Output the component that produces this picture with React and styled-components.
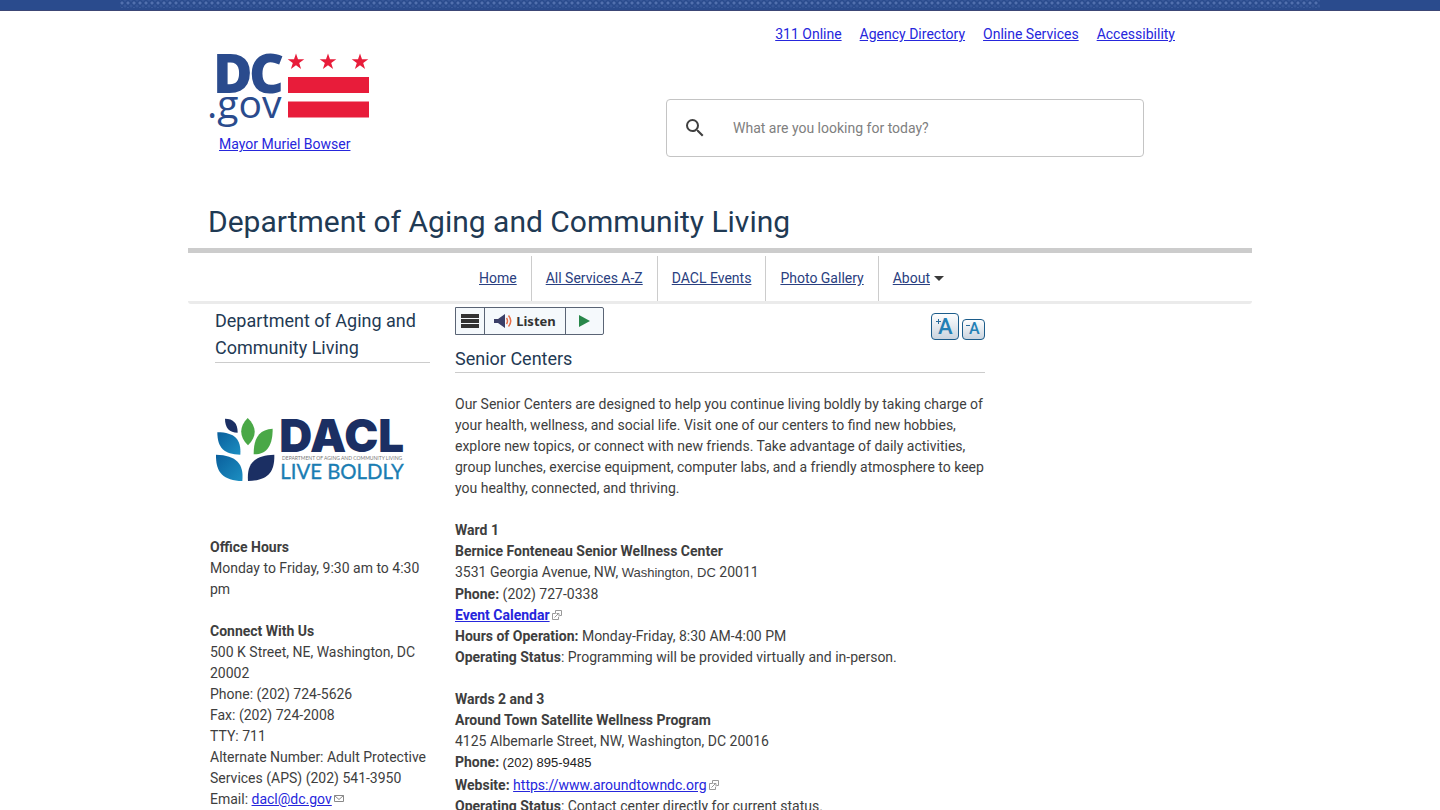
import React, { useState } from 'react';
import styled, { createGlobalStyle } from 'styled-components';
import { MdSearch } from 'react-icons/md';

const GlobalStyle = createGlobalStyle`
  body {
    margin: 0;
    background: #fff;
    color: #3e3e3e;
    font-family: Roboto, 'Liberation Sans', sans-serif;
    font-size: 14px;
    line-height: 21px;
  }
  a {
    color: #2626dc;
  }
`;

const TopBar = styled.div`
  height: 10px;
  background: #2a4b8d;
  border-bottom: 1px solid #3c4675;
`;

const Dots = styled.div`
  max-width: 1200px;
  height: 8px;
  margin: 0 auto;
  background-image: radial-gradient(circle, #5270ae 1px, transparent 2px),
    radial-gradient(circle, #38589a 1px, transparent 2px);
  background-size: 6px 6px;
  background-position: -1px 0, 2px 3px;
`;

const Wrap = styled.div`
  max-width: 1064px;
  margin: 0 auto;
`;

const Header = styled.header`
  display: flex;
  justify-content: space-between;
  padding: 13px 77px 0 20px;
`;

const Brand = styled.div`
  padding-top: 27px;
`;

const MayorLink = styled.a`
  display: block;
  margin: 7px 0 0 11px;
`;

const Tools = styled.div`
  display: flex;
  flex-direction: column;
`;

const TopLinks = styled.nav`
  display: flex;
  justify-content: flex-end;
  gap: 18px;
`;

const SearchBox = styled.form`
  display: flex;
  align-items: center;
  box-sizing: border-box;
  width: 478px;
  height: 58px;
  margin: 54px 31px 0 0;
  border: 1px solid #c4c4c4;
  border-radius: 4px;
`;

const SearchButton = styled.button`
  display: flex;
  padding: 0 16px;
  border: 0;
  background: none;
  color: #404040;
`;

const SearchInput = styled.input`
  flex: 1;
  padding: 0 10px;
  border: 0;
  outline: 0;
  font: inherit;
  &::placeholder {
    color: #808080;
  }
`;

const SiteTitle = styled.h1`
  margin: 47px 0 0;
  padding: 0 20px 8px;
  border-bottom: 5px solid #ccc;
  color: #1f3a54;
  font-size: 30px;
  font-weight: 400;
  line-height: 36px;
`;

const MainNav = styled.nav`
  display: flex;
  justify-content: center;
  padding: 3px 17px 0 0;
  border-bottom: 3px solid #ebebeb;
  border-radius: 3px;
`;

const NavItem = styled.div`
  display: flex;
  align-items: center;
  height: 45px;
  padding: 0 14px;
  border-right: ${props => (props.$last ? '0' : '1px solid #ccc')};
  a {
    color: #2a4080;
  }
`;

const Caret = styled.span`
  margin-left: 4px;
  border: 5px solid transparent;
  border-top-color: #3a3a3a;
  border-bottom: 0;
`;

const Columns = styled.div`
  display: flex;
  gap: 25px;
  padding: 3px 22px;
`;

const Sidebar = styled.aside`
  width: 220px;
`;

const BlockTitle = styled.h2`
  margin: ${props => props.$margin};
  border-bottom: 1px solid #ccc;
  color: #1f3a54;
  font-size: 18px;
  font-weight: 400;
  line-height: 27px;
`;

const SideTitle = styled(BlockTitle)`
  padding-bottom: 1px;
`;

const LogoBox = styled.div`
  padding: 54px 5px 55px;
`;

const Logo = styled.svg`
  display: block;
  overflow: visible;
`;

const Text = styled.p`
  margin: 0 0 21px;
`;

const Content = styled.main`
  width: 530px;
`;

const ToolRow = styled.div`
  display: flex;
  justify-content: space-between;
  align-items: flex-start;
`;

const Listen = styled.div`
  display: flex;
  border: 1px solid #5a6475;
  border-radius: 0 2px 2px 0;
  background: #f5f9fc;
`;

const ListenButton = styled.button`
  display: flex;
  align-items: center;
  justify-content: center;
  gap: 3px;
  box-sizing: border-box;
  width: ${props => props.$width};
  height: 26px;
  padding: 0;
  border: 0;
  border-right: ${props => (props.$last ? '0' : '1px solid #5a6475')};
  background: none;
  color: #333;
  font: bold 13px/20px 'Noto Sans', sans-serif;
`;

const SizeButtons = styled.div`
  display: flex;
  align-items: flex-end;
  gap: 3px;
  padding-top: 6px;
`;

const SizeButton = styled.button`
  padding: 0;
  border: 0;
  background: none;
  svg {
    display: block;
  }
`;

const Small = styled.span`
  display: inline-block;
  padding-bottom: ${props => props.$space};
  color: ${props => props.$color || 'inherit'};
  font-family: 'Liberation Sans', sans-serif;
  font-size: 13px;
`;

const LinkIcon = styled.svg`
  margin-left: 2px;
`;

const Star = ({ x }) => (
  <path
    fill="#e81c3a"
    transform={`translate(${x} 11)`}
    d="M0-8.5 2-2.7H8.3L3.2 1 5.1 7 0 3.3-5.1 7-3.2 1-8.3-2.7H-2Z"
  />
);

const DcLogo = () => (
  <Logo width="162" height="76" viewBox="0 0 162 76" role="img" aria-label="DC.gov">
    <g fill="#2a4b8d" fontFamily="'Open Sans', sans-serif">
      <text x="5" y="42" fontSize="54" fontWeight="800">D</text>
      <text x="41" y="42" fontSize="54" fontWeight="800">C</text>
      <text x="-1" y="67" fontSize="39" fontWeight="500">.gov</text>
    </g>
    <Star x={88} />
    <Star x={120} />
    <Star x={152} />
    <path fill="#e81c3a" d="M80 26h81v16H80zM80 50.5h81v16H80z" />
  </Logo>
);

const DaclLogo = () => (
  <Logo width="190" height="65" viewBox="45 50 570 195" role="img" aria-label="DACL Live Boldly">
    <defs>
      <linearGradient id="leaf" x1="0" y1="0" x2="1" y2="1">
        <stop offset="0" stopColor="#0a5f9c" />
        <stop offset="1" stopColor="#1c8fc2" />
      </linearGradient>
    </defs>
    <path fill="#1b2f63" d="M75 55C100 55 113 68 113 97 88 97 75 82 75 55Z" />
    <path fill="#4aa847" d="M143 53C170 78 172 108 144 135 116 108 118 78 143 53Z" />
    <path fill="#4aa847" d="M218 85C218 130 205 162 161 162 161 115 175 88 218 85Z" />
    <path fill="url(#leaf)" d="M52 96C105 96 124 118 121 163 72 163 52 142 52 96Z" />
    <path fill="url(#leaf)" d="M48 163C110 165 132 190 127 242 70 240 47 218 48 163Z" />
    <path fill="#1b2f63" d="M223 163C162 165 140 190 144 242 205 240 224 215 223 163Z" />
    <text x="238" y="155" fontSize="137" fontWeight="900" fill="#1b2f63" fontFamily="Inter, sans-serif">DACL</text>
    <text x="246" y="178" fontSize="15" fill="#777" fontFamily="Lato, sans-serif">DEPARTMENT OF AGING AND COMMUNITY LIVING</text>
    <text x="241" y="236" fontSize="61" fill="#1a7db3" stroke="#1a7db3" fontFamily="Lato, sans-serif">LIVE BOLDLY</text>
  </Logo>
);

const ExternalIcon = () => (
  <LinkIcon width="10" height="10" viewBox="0 0 10 10" fill="none" stroke="#999" aria-hidden="true">
    <path d="M3.5 3.5H.5v6h6V7M3.5.5h6v5h-2M3.5.5v3M2.5 7.5l4-4M4.5 3.5h2.5v3" />
  </LinkIcon>
);

const MailIcon = () => (
  <LinkIcon width="10" height="10" viewBox="0 0 10 10" fill="none" stroke="#888" aria-hidden="true">
    <path d="M.5 1.5h9v6h-9zM.5 1.5 5 5.5l4.5-4" />
  </LinkIcon>
);

// text size icon, a plus or minus sign beside the letter
const SizeIcon = ({ width, height, font, x, sign }) => (
  <svg width={width} height={height} aria-hidden="true">
    <defs>
      <linearGradient id={`box${width}`} x1="0" y1="0" x2="0" y2="1">
        <stop offset="0" stopColor="#fff" />
        <stop offset="1" stopColor="#c9d3de" />
      </linearGradient>
    </defs>
    <rect x=".5" y=".5" width={width - 1} height={height - 1} rx="3.5" fill={`url(#box${width})`} stroke="#1c5c8a" />
    <text x={x} y={height - 6} fontSize={font} fontWeight="500" fill="#2580b5" fontFamily="Roboto, sans-serif">A</text>
    <path d={sign} stroke="#2a6c9c" fill="none" />
  </svg>
);

const LINKS = ['311 Online', 'Agency Directory', 'Online Services', 'Accessibility'];
const NAV = ['Home', 'All Services A-Z', 'DACL Events', 'Photo Gallery', 'About'];

function App() {
  const [query, setQuery] = useState('');

  return (
    <>
      <GlobalStyle />
      <TopBar>
        <Dots />
      </TopBar>
      <Wrap>
        <Header>
          <Brand>
            <DcLogo />
            <MayorLink href="#mayor">Mayor Muriel Bowser</MayorLink>
          </Brand>
          <Tools>
            <TopLinks>
              {LINKS.map(link => (
                <a key={link} href="#top">{link}</a>
              ))}
            </TopLinks>
            <SearchBox onSubmit={e => e.preventDefault()}>
              <SearchButton type="submit" aria-label="Search">
                <MdSearch size={24} />
              </SearchButton>
              <SearchInput
                aria-label="Search"
                placeholder="What are you looking for today?"
                value={query}
                onChange={e => setQuery(e.target.value)}
              />
            </SearchBox>
          </Tools>
        </Header>
        <SiteTitle>Department of Aging and Community Living</SiteTitle>
        <MainNav>
          {NAV.map(name => (
            <NavItem key={name} $last={name === 'About'}>
              <a href="#nav">{name}</a>
              {name === 'About' && <Caret />}
            </NavItem>
          ))}
        </MainNav>
        <Columns>
          <Sidebar>
            <SideTitle $margin="0 0 0 5px">Department of Aging and Community Living</SideTitle>
            <LogoBox>
              <DaclLogo />
            </LogoBox>
            <Text>
              <b>Office Hours</b>
              <br />
              Monday to Friday, 9:30 am to 4:30 pm
            </Text>
            <Text>
              <b>Connect With Us</b>
              <br />
              500 K Street, NE, Washington, DC 20002
              <br />
              Phone: (202) 724-5626
              <br />
              Fax: (202) 724-2008
              <br />
              TTY: 711
              <br />
              Alternate Number: Adult Protective Services (APS) (202) 541-3950
              <br />
              Email: <a href="mailto:dacl@dc.gov">dacl@dc.gov</a>
              <MailIcon />
            </Text>
          </Sidebar>
          <Content>
            <ToolRow>
              <Listen>
                <ListenButton $width="29px" aria-label="Menu">
                  <svg width="18" height="14" fill="#333">
                    <path d="M0 0h18v4H0zM0 5h18v4H0zM0 10h18v4H0z" />
                  </svg>
                </ListenButton>
                <ListenButton $width="81px">
                  <svg width="19" height="14" fill="none">
                    <path d="M0 5h4l7-5v14l-7-5H0z" fill="#3b3f68" />
                    <path d="M12.500 4q2 3 0 6M14.500 1.500q4.500 5.500 0 11" stroke="#e8704a" strokeWidth="1.500" />
                  </svg>
                  Listen
                </ListenButton>
                <ListenButton $width="37px" $last aria-label="Play">
                  <svg width="11" height="12" fill="#27864a">
                    <path d="M0 0 11 6 0 12z" />
                  </svg>
                </ListenButton>
              </Listen>
              <SizeButtons>
                <SizeButton aria-label="Larger text">
                  <SizeIcon width={28} height={27} font={22} x={7} sign="M5 8.500h5M7.500 6v5" />
                </SizeButton>
                <SizeButton aria-label="Smaller text">
                  <SizeIcon width={23} height={21} font={16} x={7} sign="M4 6.500h4" />
                </SizeButton>
              </SizeButtons>
            </ToolRow>
            <BlockTitle $margin="5px 0 21px">Senior Centers</BlockTitle>
            <Text>
              Our Senior Centers are designed to help you continue living boldly by taking charge of
              your health, wellness, and social life. Visit one of our centers to find new hobbies,
              explore new topics, or connect with new friends. Take advantage of daily activities,
              group lunches, exercise equipment, computer labs, and a friendly atmosphere to keep
              you healthy, connected, and thriving.
            </Text>
            <Text>
              <b>Ward 1</b>
              <br />
              <b>Bernice Fonteneau Senior Wellness Center</b>
              <br />
              3531 Georgia Avenue, NW, <Small $space="1px">Washington, DC</Small> 20011
              <br />
              <b>Phone:</b> (202) 727-0338
              <br />
              <b>
                <a href="#calendar">Event Calendar</a>
              </b>
              <ExternalIcon />
              <br />
              <b>Hours of Operation:</b> Monday-Friday, 8:30 AM-4:00 PM
              <br />
              <b>Operating Status</b>: Programming will be provided virtually and in-person.
            </Text>
            <Text>
              <b>Wards 2 and 3</b>
              <br />
              <b>Around Town Satellite Wellness Program</b>
              <br />
              4125 Albemarle Street, NW, Washington, DC 20016
              <br />
              <b>Phone:</b> <Small $space="2px" $color="#222">(202) 895-9485</Small>
              <br />
              <b>Website:</b> <a href="#website">https://www.aroundtowndc.org</a>
              <ExternalIcon />
              <br />
              <b>Operating Status</b>: Contact center directly for current status.
            </Text>
          </Content>
        </Columns>
      </Wrap>
    </>
  );
}

export default App;
